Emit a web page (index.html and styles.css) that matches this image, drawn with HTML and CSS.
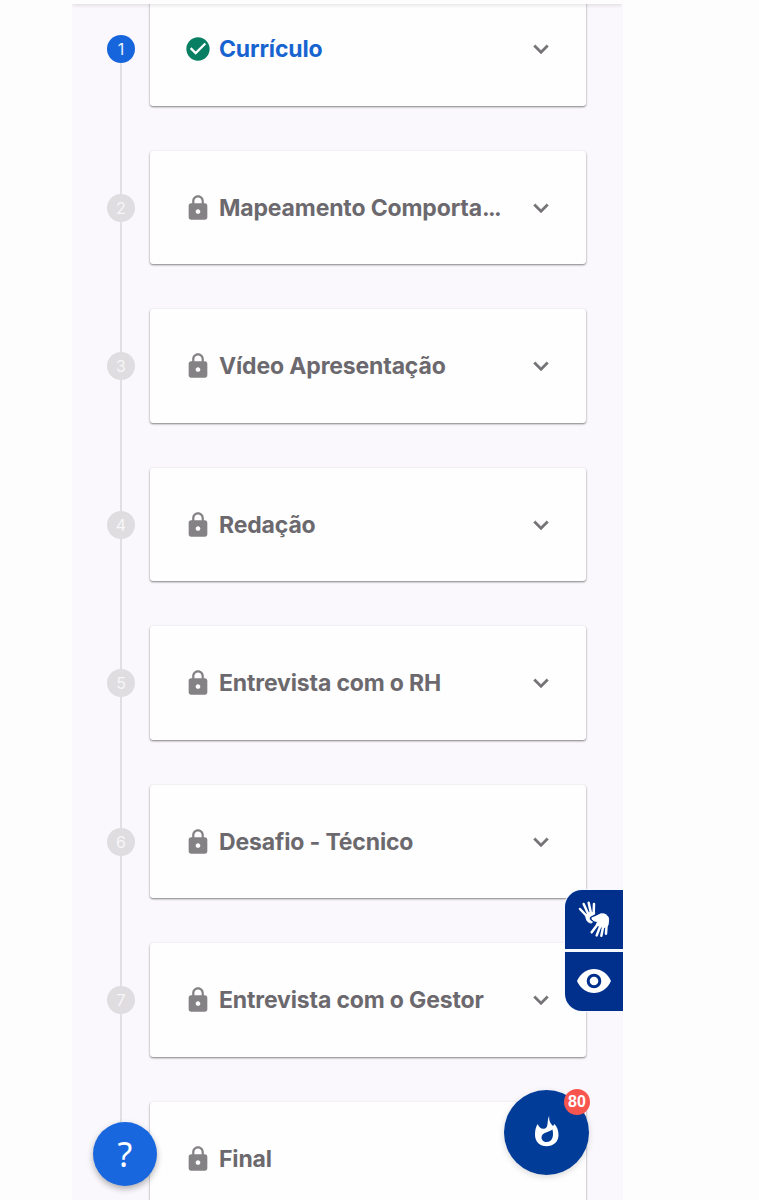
FILE: index.html
```html
<!DOCTYPE html>
<html lang="pt-BR">

<head>
    <meta charset="UTF-8" />
    <meta name="viewport" content="width=device-width, initial-scale=1.0" />
    <title>Etapas</title>
    <link rel="stylesheet" href="styles.css">
</head>

<body>
    <!-- Icones reutilizados -->
    <svg class="sprite" aria-hidden="true">
        <symbol id="lock" viewBox="0 0 24 24">
            <path d="M18 8h-1V6c0-2.760-2.240-5-5-5S7 3.240 7 6v2H6c-1.100 0-2 .9-2 2v10c0 1.100.9 2 2 2h12c1.100 0 2-.9 2-2V10c0-1.100-.9-2-2-2zm-6 9c-1.100 0-2-.9-2-2s.9-2 2-2 2 .9 2 2-.9 2-2 2zm3.100-9H8.900V6c0-1.710 1.390-3.100 3.100-3.100s3.100 1.390 3.100 3.100v2z" />
        </symbol>
        <symbol id="check" viewBox="0 0 24 24">
            <path d="M12 2C6.480 2 2 6.480 2 12s4.480 10 10 10 10-4.480 10-10S17.520 2 12 2zm-2 15l-5-5 1.410-1.410L10 14.170l7.590-7.590L19 8l-9 9z" />
        </symbol>
        <symbol id="chevron" viewBox="0 0 24 24">
            <path d="M7.410 8.590 12 13.170l4.590-4.580L18 10l-6 6-6-6z" />
        </symbol>
    </svg>

    <div class="topbar"></div>

    <main class="panel">
        <ol class="steps">
            <li class="step active">
                <span class="number">1</span>
                <div class="card">
                    <svg class="status"><use href="#check" /></svg>
                    <h2>Currículo</h2>
                    <svg class="chevron"><use href="#chevron" /></svg>
                </div>
            </li>
            <li class="step">
                <span class="number">2</span>
                <div class="card">
                    <svg class="status"><use href="#lock" /></svg>
                    <h2>Mapeamento Comporta<span class="dots">...</span></h2>
                    <svg class="chevron"><use href="#chevron" /></svg>
                </div>
            </li>
            <li class="step">
                <span class="number">3</span>
                <div class="card">
                    <svg class="status"><use href="#lock" /></svg>
                    <h2>Vídeo Apresentação</h2>
                    <svg class="chevron"><use href="#chevron" /></svg>
                </div>
            </li>
            <li class="step">
                <span class="number">4</span>
                <div class="card">
                    <svg class="status"><use href="#lock" /></svg>
                    <h2>Redação</h2>
                    <svg class="chevron"><use href="#chevron" /></svg>
                </div>
            </li>
            <li class="step">
                <span class="number">5</span>
                <div class="card">
                    <svg class="status"><use href="#lock" /></svg>
                    <h2>Entrevista com o RH</h2>
                    <svg class="chevron"><use href="#chevron" /></svg>
                </div>
            </li>
            <li class="step">
                <span class="number">6</span>
                <div class="card">
                    <svg class="status"><use href="#lock" /></svg>
                    <h2>Desafio - Técnico</h2>
                    <svg class="chevron"><use href="#chevron" /></svg>
                </div>
            </li>
            <li class="step">
                <span class="number">7</span>
                <div class="card">
                    <svg class="status"><use href="#lock" /></svg>
                    <h2>Entrevista com o Gestor</h2>
                    <svg class="chevron"><use href="#chevron" /></svg>
                </div>
            </li>
            <li class="step">
                <span class="number"></span>
                <div class="card">
                    <svg class="status"><use href="#lock" /></svg>
                    <h2>Final</h2>
                </div>
            </li>
        </ol>

        <!-- Acessibilidade -->
        <div class="access">
            <button class="access-btn" aria-label="Libras">
                <svg class="hands" viewBox="0 0 150 180">
                    <g class="hand">
                        <path d="M53 78 33 57M58 73 44 42M66 70 59 38M74 70 75 42" />
                        <path class="palm" d="M50 76 60 68 77 67 77 72 64 79C59 84 61 92 70 95L68 99C57 99 51 92 50 76z" />
                    </g>
                    <g class="hand">
                        <path d="M86 103 68 127M94 108 83 136M103 108 97 137M113 102 111 131M90 78 71 85" />
                        <path class="palm" d="M82 79 94 72C110 69 118 78 119 88L117 106 108 112 94 110 82 104 86 95 74 92 70 88z" />
                    </g>
                </svg>
            </button>
            <button class="access-btn" aria-label="Contraste">
                <svg class="eye" viewBox="0 0 36 26">
                    <path d="M1 13C8-3 28-3 35 13C28 29 8 29 1 13z" fill="#fff" />
                    <circle cx="18" cy="13" r="5.800" fill="#fff" stroke="#01308c" stroke-width="3" />
                </svg>
            </button>
        </div>

        <button class="help">?</button>

        <button class="fire" aria-label="Pontos">
            <svg viewBox="0 0 24 31">
                <path d="M14.300 0C13.500 5 16 8 18 10L19.500 8C22 11 23.500 14 23.500 19C23.500 26 18 30.300 11.500 30.300C5 30.300 0 26 0 18.500C0 14 1 10.500 2.700 8C4 12 7 13.500 10 12.500C14 11 11.500 4 14.300 0z" fill="#fff" />
                <path d="M17.500 13.500C15 16 6.500 16 6.500 21.500C6.500 24 8.700 26 11.500 26C17.500 26 19 20 17.500 13.500z" fill="#023c99" />
            </svg>
            <span class="badge">80</span>
        </button>
    </main>
</body>

</html>
```
FILE: styles.css
```css
* {
    box-sizing: border-box;
}

body {
    font-family: Inter, "Liberation Sans", sans-serif;
    margin: 0;
    background: #fdfdfd;
    height: 1200px;
    overflow: hidden;
}

button {
    border: none;
    padding: 0;
    color: #fff;
    font-family: inherit;
    cursor: pointer;
}

.sprite {
    position: absolute;
    width: 0;
    height: 0;
}

.topbar {
    position: absolute;
    top: 0;
    left: 72px;
    width: 550px;
    height: 4px;
    background: #fdfdfd;
    box-shadow: 0 1px 4px rgba(0, 0, 0, 0.14);
    z-index: 5;
    clip-path: inset(0 0 -8px 0);
}

.panel {
    position: relative;
    width: 551px;
    height: 1200px;
    margin-left: 72px;
    background: #faf8fc;
    overflow: hidden;
}

.steps {
    list-style: none;
    margin: -8px 0 0;
    padding: 0 36px 0 35px;
}

.step {
    display: grid;
    grid-template-columns: 28px 436px;
    column-gap: 15px;
    height: 158.5px;
    /* linha entre os passos */
    background: linear-gradient(#e0dfe1, #e0dfe1) 13px 0 / 2px 100% no-repeat;
}

.step:first-child {
    background-position: 13px 57px;
}

.step:last-child {
    background-size: 2px 57px;
}

.number {
    width: 28px;
    height: 28px;
    margin-top: 43px;
    border-radius: 50%;
    background: #dfdde0;
    color: #f7f6f8;
    font-size: 16px;
    line-height: 28px;
    text-align: center;
}

.card {
    display: flex;
    align-items: center;
    height: 113.5px;
    padding: 1px 30px 0 34px;
    background: #fefefe;
    border-radius: 3px;
    box-shadow: 0 1px 2px rgba(0, 0, 0, 0.42), 0 1px 3px rgba(0, 0, 0, 0.1);
}

.status {
    width: 28px;
    height: 28px;
    margin-right: 7px;
    fill: #858286;
}

.card h2 {
    flex: 1;
    margin: 0;
    font-size: 23px;
    font-weight: 700;
    letter-spacing: -0.15px;
    line-height: 30px;
    color: #6c696e;
    white-space: nowrap;
}

.dots {
    letter-spacing: -1.6px;
}

.chevron {
    width: 30px;
    height: 30px;
    fill: #747275;
    stroke: #747275;
    stroke-width: 0.3;
}

.active .number {
    background: #1765dc;
    color: #e9f1fd;
}

.active .status {
    fill: #087f62;
}

.active h2 {
    color: #1764d0;
}

/* botoes flutuantes */
.access {
    position: absolute;
    top: 889px;
    right: 0;
    display: flex;
    flex-direction: column;
    gap: 3px;
    width: 59px;
    border: 1px solid #f5f8ff;
    border-right: none;
    border-radius: 18px 0 0 18px;
    background: #f5f8ff;
    overflow: hidden;
}

.access-btn {
    display: flex;
    align-items: center;
    justify-content: center;
    height: 59px;
    background: #01308c;
}

.hands {
    width: 50px;
    height: 60px;
}

.hand path {
    fill: none;
    stroke: #fff;
    stroke-width: 7.5;
    stroke-linecap: round;
    stroke-linejoin: round;
}

.hand .palm {
    fill: #fff;
    stroke-width: 3;
}

.eye {
    width: 36px;
    height: 26px;
    margin-bottom: 2px;
}

.help {
    position: absolute;
    left: 21px;
    top: 1122px;
    width: 64px;
    height: 64px;
    border-radius: 50%;
    background: #1967df;
    box-shadow: 0 3px 6px rgba(0, 0, 0, 0.3);
    font-family: "Noto Sans", sans-serif;
    font-size: 34px;
    line-height: 64px;
}

.fire {
    position: absolute;
    left: 432px;
    top: 1090px;
    display: flex;
    align-items: center;
    justify-content: center;
    width: 85px;
    height: 85px;
    padding-bottom: 3px;
    border-radius: 50%;
    background: #023c99;
    box-shadow: 0 2px 6px rgba(0, 0, 0, 0.15);
}

.fire svg {
    width: 24px;
    height: 31px;
}

.badge {
    position: absolute;
    top: -1px;
    right: -1px;
    width: 26px;
    height: 26px;
    border-radius: 50%;
    background: #f9554f;
    font-family: "Liberation Sans", sans-serif;
    font-size: 16px;
    font-weight: 700;
    line-height: 26px;
    text-align: center;
}
```
